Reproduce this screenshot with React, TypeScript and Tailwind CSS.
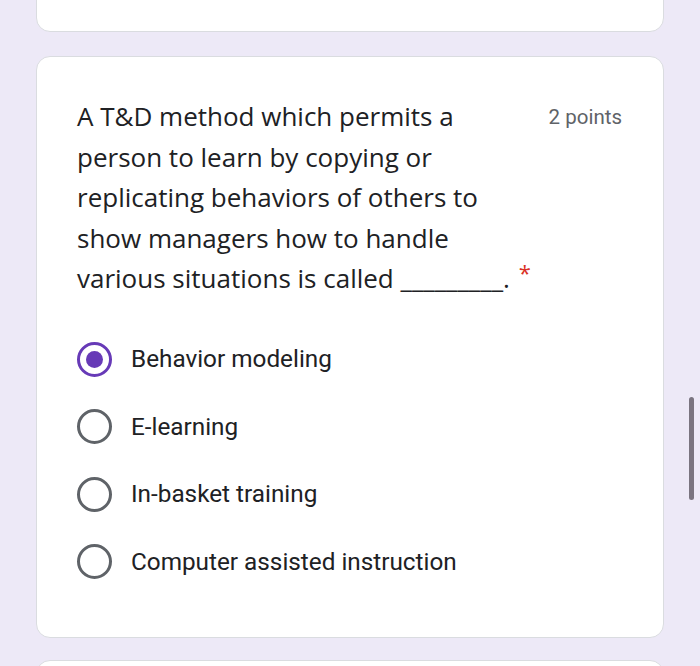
const options = [
  'Behavior modeling',
  'E-learning',
  'In-basket training',
  'Computer assisted instruction',
];

function Radio({ checked }: { checked: boolean }) {
  return (
    <div
      className={
        checked
          ? 'w-[35px] h-[35px] rounded-full border-[3px] border-[#673ab7] flex items-center justify-center shrink-0'
          : 'w-[35px] h-[35px] rounded-full border-[3px] border-[#5f6368] shrink-0'
      }
    >
      {checked && <div className="w-[17px] h-[17px] rounded-full bg-[#673ab7]" />}
    </div>
  );
}

export default function App() {
  return (
    <div
      className="w-[700px] h-[666px] overflow-hidden bg-[#ede9f7] relative"
      style={{ fontFamily: 'Roboto, "Noto Sans", sans-serif' }}
    >
      <div className="mx-[36px] -mt-[20px] h-[52px] bg-white rounded-[14px] border border-[#dadce0]" />

      <div className="mx-[36px] mt-[24px] h-[582px] bg-white rounded-[14px] border border-[#dadce0] pl-[40px] pr-[41px] pt-[39px]">
        <div className="flex justify-between">
          <div
            className="text-[26px] leading-[40.5px] text-[#202124]"
            style={{ fontFamily: '"Open Sans", Roboto, sans-serif' }}
          >
            A T&amp;D method which permits a<br />
            person to learn by copying or<br />
            replicating behaviors of others to<br />
            show managers how to handle<br />
            various situations is called _________.
            <span className="text-[#d93025] text-[22px] align-top relative top-[-6px] ml-[9px]">*</span>
          </div>
          <div className="text-[20.5px] leading-[40px] text-[#5f6368] pt-[1px]">2 points</div>
        </div>

        <div className="mt-[27px] flex flex-col">
          {options.map((o, i) => (
            <div key={o} className="flex items-center h-[67.5px]">
              <Radio checked={i === 0} />
              <span className="ml-[19px] text-[24.3px] text-[#202124]">{o}</span>
            </div>
          ))}
        </div>
      </div>

      <div className="mx-[36px] mt-[22px] h-[40px] bg-white rounded-[14px] border border-[#dadce0]" />

      <div className="absolute left-[689px] top-[397px] w-[5px] h-[103px] rounded-full bg-[#7a7480]" />
    </div>
  );
}
